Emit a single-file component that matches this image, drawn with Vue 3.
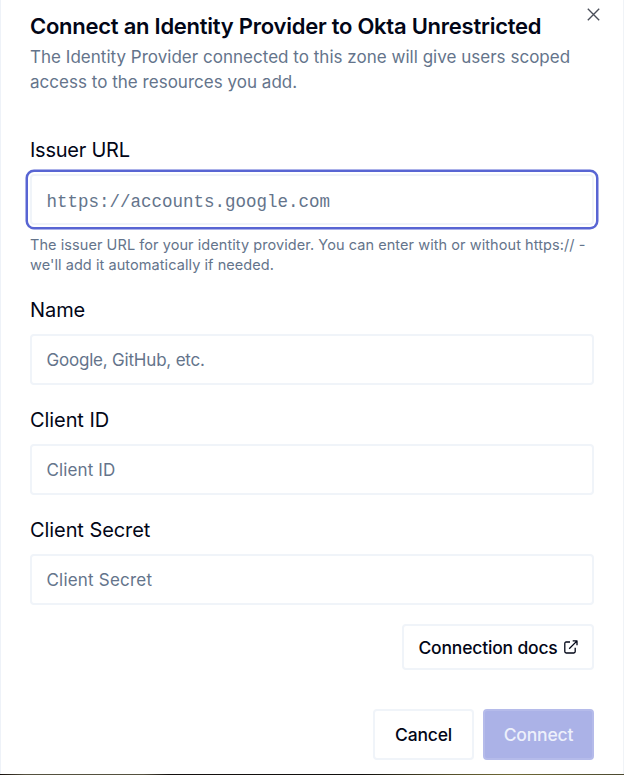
<script setup>
import { reactive } from 'vue'

const fields = reactive([
  {
    id: 'issuer', label: 'Issuer URL', placeholder: 'https://accounts.google.com', mono: true, focused: true, value: '',
    help: ['The issuer URL for your identity provider. You can enter with or without https:// -', "we'll add it automatically if needed."],
  },
  { id: 'name', label: 'Name', placeholder: 'Google, GitHub, etc.', value: '' },
  { id: 'client-id', label: 'Client ID', placeholder: 'Client ID', value: '' },
  { id: 'client-secret', label: 'Client Secret', placeholder: 'Client Secret', value: '' },
])
</script>

<template>
  <div class="screen">
    <main class="dialog">
      <button class="close" aria-label="Close">
        <svg width="13" height="13" viewBox="0 0 13 13" fill="none" stroke="currentColor" stroke-width="1.35">
          <path d="M.8.8l11.4 11.4M12.2.8L.8 12.2" />
        </svg>
      </button>
      <header>
        <h1>Connect an Identity Provider to Okta Unrestricted</h1>
        <p>The Identity Provider connected to this zone will give users scoped<br>access to the resources you add.</p>
      </header>
      <form @submit.prevent>
        <div v-for="f in fields" :key="f.id" class="field">
          <label :for="f.id" :class="f.id">{{ f.label }}</label>
          <input :id="f.id" v-model="f.value" :placeholder="f.placeholder" :class="[f.id, { mono: f.mono, focused: f.focused }]" />
          <div v-if="f.help" class="help">
            <div v-for="line in f.help" :key="line">{{ line }}</div>
          </div>
        </div>
        <div class="docs-row">
          <button type="button" class="btn docs">
            <span>Connection docs</span>
            <svg width="14" height="14" viewBox="0 0 14 14" fill="none" stroke="currentColor" stroke-width="1.3" stroke-linejoin="round">
              <path d="M6 2H2.2Q.8 2 .8 3.4v8.2Q.8 13 2.2 13h7.6q1.4 0 1.4-1.4V7.8M8.7.9H13v4.3M12.8 1.1L5.2 8.7" />
            </svg>
          </button>
        </div>
        <footer>
          <button type="button" class="btn cancel">Cancel</button>
          <button type="submit" class="btn connect" disabled>Connect</button>
        </footer>
      </form>
    </main>
    <div class="backdrop"></div>
  </div>
</template>

<style>
body { overflow: hidden; background: #fff; }
</style>

<style scoped>
* { box-sizing: border-box; }
.screen {
  height: 775px;
  display: flex;
  flex-direction: column;
  font-family: Inter, "Liberation Sans", sans-serif;
  color: #020617;
}
.dialog {
  position: relative;
  flex: 1;
  padding: 11px 29px 0;
  border-left: 1px solid #eef2f8;
  border-right: 1px solid #f0f3f7;
  background: #fff;
}
.backdrop {
  height: 1px;
  background: linear-gradient(90deg, #160f0c, #55513f 4%, #55513f 23%, #15110f 27%, #12100e 58%, #554f2b 72%, #716a36 82%, #4b4930);
}
.close {
  position: absolute;
  top: 8px;
  right: 23px;
  width: 13px;
  height: 13px;
  padding: 0;
  border: 0;
  background: none;
  color: #4a4e59;
  display: flex;
}
h1, p { margin: 0; white-space: nowrap; }
h1 { font-size: 22px; line-height: 30px; font-weight: 600; letter-spacing: -0.25px; }
p { margin-top: 4px; font-size: 17px; line-height: 25px; letter-spacing: 0.02px; color: #64748b; }
header { height: 127px; }
.field { height: 110px; }
.field:first-child { height: 160px; }
label { display: block; height: 36px; font-size: 20px; line-height: 25px; letter-spacing: -0.08px; }
label.issuer { letter-spacing: -0.25px; }
input {
  display: block;
  width: 564px;
  height: 51px;
  padding: 1px 14.5px 0;
  border: 2px solid #f0f4f9;
  border-radius: 4px;
  background: #fff;
  color: #020617;
  font: 17px Inter, "Liberation Sans", sans-serif;
  outline: none;
}
input::placeholder { color: #64748b; opacity: 1; }
input.mono { padding-top: 5px; font-family: "Liberation Mono", monospace; font-size: 17.5px; }
input.name { letter-spacing: -0.2px; }
input.client-id { letter-spacing: 0.12px; }
input.client-secret { letter-spacing: 0.2px; }
input.focused { box-shadow: 0 0 0 2px #fff, 0 0 0 4.5px #5865d3; }
.help { padding-top: 10px; font-size: 14.5px; line-height: 20px; letter-spacing: 0.07px; color: #64748b; white-space: nowrap; }
.docs-row { display: flex; justify-content: flex-end; margin-top: -4px; }
.btn {
  display: flex;
  align-items: center;
  justify-content: center;
  padding: 0;
  height: 51px;
  border: 2px solid #f0f4f9;
  border-radius: 4px;
  background: #fff;
  color: #020617;
  font: 500 17.5px Inter, "Liberation Sans", sans-serif;
  letter-spacing: -0.18px;
  white-space: nowrap;
}
.docs { width: 192px; height: 46px; gap: 6px; }
footer { display: flex; justify-content: flex-end; gap: 9px; margin-top: 39px; }
.cancel { width: 101px; }
.connect { width: 111px; border-color: #b5bbea; background: #abb2e7; color: #edf0fb; }
</style>
